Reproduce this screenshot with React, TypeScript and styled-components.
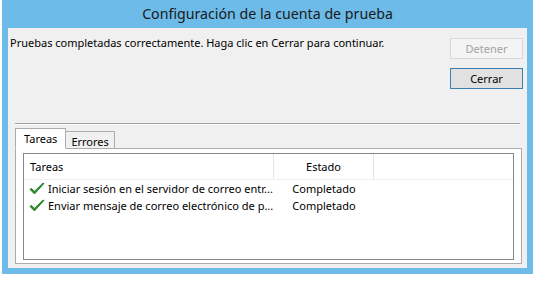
import React from "react";
import styled, { createGlobalStyle } from "styled-components";

const Global = createGlobalStyle`
  html, body { margin: 0; padding: 0; background: #ffffff; }
  body { font-family: "Noto Sans", "Open Sans", sans-serif; font-size: 11px; color: #000; }
`;

const Window = styled.div`
  margin-left: 2px;
  width: 531px;
  background: #6cbbe8;
  padding: 0 6px 6px 6px;
  box-sizing: border-box;
  display: flex;
  flex-direction: column;
`;

const TitleBar = styled.div`
  height: 28px;
  display: flex;
  align-items: center;
  justify-content: center;
  font-size: 14.2px;
  color: #1a1a1a;
  padding-bottom: 1px;
  box-sizing: border-box;
`;

const Body = styled.div`
  background: #f0f0f0;
  height: 240px;
  display: flex;
  flex-direction: column;
  box-sizing: border-box;
  overflow: hidden;
`;

const TopRow = styled.div`
  display: flex;
  justify-content: space-between;
  padding: 7px 4px 0 2px;
`;

const Message = styled.div`
  line-height: 16px;
`;

const ButtonColumn = styled.div`
  display: flex;
  flex-direction: column;
  gap: 9px;
  padding-top: 3px;
`;

const Button = styled.button<{ $default?: boolean }>`
  width: 73px;
  height: 21px;
  font-family: inherit;
  font-size: 11px;
  padding: 0;
  box-sizing: border-box;
  background: ${p => (p.disabled ? "#f4f4f4" : "#e1e1e1")};
  color: ${p => (p.disabled ? "#a3a3a3" : "#000")};
  border: 1px solid ${p => (p.disabled ? "#d9d9d9" : p.$default ? "#3c7fb1" : "#adadad")};
`;

const Separator = styled.div`
  margin: 34px 7px 0 7px;
  height: 1px;
  background: #a0a0a0;
  border-bottom: 1px solid #ffffff;
`;

const TabArea = styled.div`
  margin: 3px 5px 0 7px;
  display: flex;
  flex-direction: column;
`;

const TabStrip = styled.div`
  display: flex;
  align-items: flex-start;
  height: 20px;
  position: relative;
  z-index: 1;
`;

const Tab = styled.div<{ $active?: boolean }>`
  height: ${p => (p.$active ? "21px" : "17px")};
  margin-top: ${p => (p.$active ? "0" : "3px")};
  padding: 0 ${p => (p.$active ? "8px" : "5px")};
  display: flex;
  align-items: center;
  box-sizing: border-box;
  border: 1px solid #acacac;
  border-bottom: ${p => (p.$active ? "1px solid #ffffff" : "none")};
  margin-left: ${p => (p.$active ? "0" : "-1px")};
  background: ${p => (p.$active ? "#ffffff" : "#f0f0f0")};
  padding-top: ${p => (p.$active ? "0" : "2px")};
`;

const TabPanel = styled.div`
  border: 1px solid #acacac;
  background: #ffffff;
  height: 116px;
  box-sizing: border-box;
  padding: 4px 7px 3px 7px;
  display: flex;
`;

const ListView = styled.div`
  flex: 1;
  border: 1px solid #828790;
  background: #ffffff;
  display: flex;
  flex-direction: column;
`;

const HeaderRow = styled.div`
  display: grid;
  grid-template-columns: 250px 100px 1fr;
  height: 25px;
  border-bottom: 1px solid #f0f0f0;
`;

const HeaderCell = styled.div<{ $center?: boolean }>`
  display: flex;
  align-items: center;
  justify-content: ${p => (p.$center ? "center" : "flex-start")};
  padding-left: ${p => (p.$center ? "0" : "6px")};
  border-right: 1px solid #e5e5e5;
`;

const Rows = styled.div`
  display: flex;
  flex-direction: column;
`;

const Row = styled.div`
  display: grid;
  grid-template-columns: 250px 100px 1fr;
  height: 17px;
  align-items: center;
`;

const TaskCell = styled.div`
  display: flex;
  align-items: center;
  padding-left: 5px;
  gap: 3px;
  white-space: nowrap;
  overflow: hidden;
  svg { flex-shrink: 0; }
`;

const StatusCell = styled.div`
  text-align: center;
`;

const Check = () => (
  <svg width="16" height="13" viewBox="0 0 16 13">
    <path d="M1 7.5 L5.5 12 L15 1.5 L14 1 L5.5 9.3 L2.2 6.3 Z" fill="#2e8b2e" stroke="#1f7a22" strokeWidth="0.8" strokeLinejoin="round" />
  </svg>
);

const tasks = [
  "Iniciar sesión en el servidor de correo entr...",
  "Enviar mensaje de correo electrónico de p...",
];

export default function App() {
  return (
    <>
      <Global />
      <Window>
        <TitleBar>Configuración de la cuenta de prueba</TitleBar>
        <Body>
          <TopRow>
            <Message>Pruebas completadas correctamente. Haga clic en Cerrar para continuar.</Message>
            <ButtonColumn>
              <Button disabled>Detener</Button>
              <Button $default>Cerrar</Button>
            </ButtonColumn>
          </TopRow>
          <Separator />
          <TabArea>
            <TabStrip>
              <Tab $active>Tareas</Tab>
              <Tab>Errores</Tab>
            </TabStrip>
            <TabPanel>
              <ListView>
                <HeaderRow>
                  <HeaderCell>Tareas</HeaderCell>
                  <HeaderCell $center>Estado</HeaderCell>
                  <div />
                </HeaderRow>
                <Rows>
                  {tasks.map(t => (
                    <Row key={t}>
                      <TaskCell>
                        <Check />
                        <span>{t}</span>
                      </TaskCell>
                      <StatusCell>Completado</StatusCell>
                      <div />
                    </Row>
                  ))}
                </Rows>
              </ListView>
            </TabPanel>
          </TabArea>
        </Body>
      </Window>
    </>
  );
}
